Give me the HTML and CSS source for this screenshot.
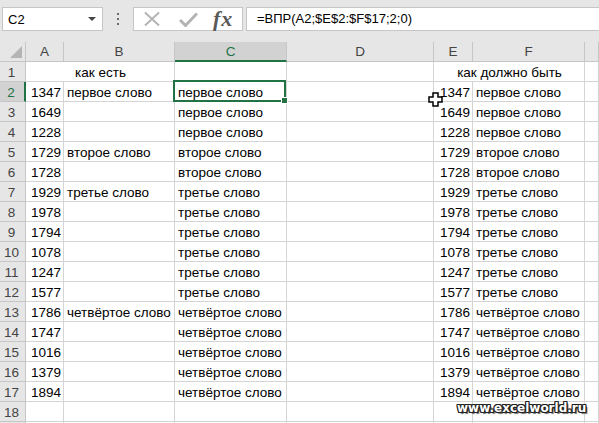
FILE: index.html
```html
<!DOCTYPE html>
<html>

<head>
    <title>ВПР</title>
    <link rel="stylesheet" href="styles.css">
</head>

<body>

    <div class="excel">
        <div class="toolbar">
            <div class="namebox"><span>C2</span><span class="caret"></span></div>
            <div class="grip"><i></i><i></i><i></i></div>
            <div class="fxbox">
                <svg class="cancel" width="18" height="14" viewBox="0 0 18 14">
                    <path d="M2 0.5 L16 13.5 M16 0.5 L2 13.5" />
                </svg>
                <svg class="enter" width="19" height="15" viewBox="0 0 19 15">
                    <path d="M1 8 L6.5 13.5 L18 1.5" />
                </svg>
                <span class="fx">fx</span>
            </div>
            <div class="formula">=ВПР(A2;$E$2:$F$17;2;0)</div>
        </div>

        <div class="sheet">
            <div class="corner"></div>
            <div class="colh">A</div>
            <div class="colh">B</div>
            <div class="colh on">C</div>
            <div class="colh">D</div>
            <div class="colh">E</div>
            <div class="colh">F</div>
            <div class="colh"></div>

            <div class="rowh">1</div>
            <div class="c mid wide">как есть</div>
            <div class="c"></div>
            <div class="c"></div>
            <div class="c mid wide">как должно быть</div>
            <div class="c"></div>

            <div class="rowh on">2</div>
            <div class="c n">1347</div>
            <div class="c">первое слово</div>
            <div class="c sel">первое слово</div>
            <div class="c"></div>
            <div class="c n">1347</div>
            <div class="c">первое слово</div>
            <div class="c"></div>

            <div class="rowh">3</div>
            <div class="c n">1649</div>
            <div class="c"></div>
            <div class="c">первое слово</div>
            <div class="c"></div>
            <div class="c n">1649</div>
            <div class="c">первое слово</div>
            <div class="c"></div>

            <div class="rowh">4</div>
            <div class="c n">1228</div>
            <div class="c"></div>
            <div class="c">первое слово</div>
            <div class="c"></div>
            <div class="c n">1228</div>
            <div class="c">первое слово</div>
            <div class="c"></div>

            <div class="rowh">5</div>
            <div class="c n">1729</div>
            <div class="c">второе слово</div>
            <div class="c">второе слово</div>
            <div class="c"></div>
            <div class="c n">1729</div>
            <div class="c">второе слово</div>
            <div class="c"></div>

            <div class="rowh">6</div>
            <div class="c n">1728</div>
            <div class="c"></div>
            <div class="c">второе слово</div>
            <div class="c"></div>
            <div class="c n">1728</div>
            <div class="c">второе слово</div>
            <div class="c"></div>

            <div class="rowh">7</div>
            <div class="c n">1929</div>
            <div class="c">третье слово</div>
            <div class="c">третье слово</div>
            <div class="c"></div>
            <div class="c n">1929</div>
            <div class="c">третье слово</div>
            <div class="c"></div>

            <div class="rowh">8</div>
            <div class="c n">1978</div>
            <div class="c"></div>
            <div class="c">третье слово</div>
            <div class="c"></div>
            <div class="c n">1978</div>
            <div class="c">третье слово</div>
            <div class="c"></div>

            <div class="rowh">9</div>
            <div class="c n">1794</div>
            <div class="c"></div>
            <div class="c">третье слово</div>
            <div class="c"></div>
            <div class="c n">1794</div>
            <div class="c">третье слово</div>
            <div class="c"></div>

            <div class="rowh">10</div>
            <div class="c n">1078</div>
            <div class="c"></div>
            <div class="c">третье слово</div>
            <div class="c"></div>
            <div class="c n">1078</div>
            <div class="c">третье слово</div>
            <div class="c"></div>

            <div class="rowh">11</div>
            <div class="c n">1247</div>
            <div class="c"></div>
            <div class="c">третье слово</div>
            <div class="c"></div>
            <div class="c n">1247</div>
            <div class="c">третье слово</div>
            <div class="c"></div>

            <div class="rowh">12</div>
            <div class="c n">1577</div>
            <div class="c"></div>
            <div class="c">третье слово</div>
            <div class="c"></div>
            <div class="c n">1577</div>
            <div class="c">третье слово</div>
            <div class="c"></div>

            <div class="rowh">13</div>
            <div class="c n">1786</div>
            <div class="c">четвёртое слово</div>
            <div class="c">четвёртое слово</div>
            <div class="c"></div>
            <div class="c n">1786</div>
            <div class="c">четвёртое слово</div>
            <div class="c"></div>

            <div class="rowh">14</div>
            <div class="c n">1747</div>
            <div class="c"></div>
            <div class="c">четвёртое слово</div>
            <div class="c"></div>
            <div class="c n">1747</div>
            <div class="c">четвёртое слово</div>
            <div class="c"></div>

            <div class="rowh">15</div>
            <div class="c n">1016</div>
            <div class="c"></div>
            <div class="c">четвёртое слово</div>
            <div class="c"></div>
            <div class="c n">1016</div>
            <div class="c">четвёртое слово</div>
            <div class="c"></div>

            <div class="rowh">16</div>
            <div class="c n">1379</div>
            <div class="c"></div>
            <div class="c">четвёртое слово</div>
            <div class="c"></div>
            <div class="c n">1379</div>
            <div class="c">четвёртое слово</div>
            <div class="c"></div>

            <div class="rowh">17</div>
            <div class="c n">1894</div>
            <div class="c"></div>
            <div class="c">четвёртое слово</div>
            <div class="c"></div>
            <div class="c n">1894</div>
            <div class="c">четвёртое слово</div>
            <div class="c"></div>

            <div class="rowh">18</div>
            <div class="c"></div>
            <div class="c"></div>
            <div class="c"></div>
            <div class="c"></div>
            <div class="c"></div>
            <div class="c"></div>
            <div class="c"></div>

            <!-- row 19, only its top edge is on screen -->
            <div class="rowh"></div>
            <div class="c"></div>
            <div class="c"></div>
            <div class="c"></div>
            <div class="c"></div>
            <div class="c"></div>
            <div class="c"></div>
            <div class="c"></div>
        </div>

        <!-- mouse pointer over E2 -->
        <svg class="cursor" width="15" height="15" viewBox="0 0 15 15">
            <path d="M5 1 H10 V5 H14 V10 H10 V14 H5 V10 H1 V5 H5 Z" />
        </svg>

        <div class="watermark">www.excelworld.ru</div>
    </div>

</body>

</html>
```

FILE: styles.css
```css
* {
    box-sizing: border-box
}

body {
    margin: 0;
    background: #fff;
}

.excel {
    position: relative;
    width: 599px;
    height: 423px;
    overflow: hidden;
    font-family: "Liberation Sans", Arial, sans-serif;
    color: #000;
}

/* formula bar */

.toolbar {
    display: flex;
    height: 42px;
    padding-top: 7px;
    background: #e6e6e6;
}

.namebox {
    display: flex;
    align-items: center;
    justify-content: space-between;
    margin-left: 2px;
    width: 101px;
    height: 24px;
    padding: 0 6px 0 5px;
    border: 1px solid #c6c6c6;
    background: #fff;
    font-size: 13px;
}

.caret {
    width: 0;
    height: 0;
    border-left: 4px solid transparent;
    border-right: 4px solid transparent;
    border-top: 4px solid #444;
}

.grip {
    display: flex;
    flex-direction: column;
    align-items: center;
    justify-content: center;
    gap: 3px;
    width: 30px;
    height: 24px;
}

.grip i {
    display: block;
    width: 2px;
    height: 2px;
    background: #6b6b6b;
}

.fxbox {
    display: flex;
    align-items: center;
    width: 110px;
    height: 24px;
    border: 1px solid #c6c6c6;
    background: #fff;
}

.fxbox svg {
    fill: none;
    stroke: #b4b4b4;
}

.cancel {
    margin-left: 9px;
    stroke-width: 2;
}

.enter {
    margin-left: 18px;
    stroke-width: 3;
}

.fx {
    margin-left: 15px;
    font-family: "Liberation Serif", serif;
    font-style: italic;
    font-weight: bold;
    font-size: 22px;
    line-height: 22px;
    letter-spacing: 1px;
    color: #595959;
}

.formula {
    flex: 1;
    margin-left: 3px;
    height: 24px;
    padding-left: 10px;
    border: 1px solid #c6c6c6;
    border-right: none;
    background: #fff;
    font-size: 13px;
    line-height: 22px;
}

/* grid */

.sheet {
    display: grid;
    grid-template-columns: 26px 38px 111px 112px 147px 39px 112px 14px;
    grid-auto-rows: 20px;
    font-size: 13.5px;
}

.corner {
    position: relative;
    background: #e6e6e6;
    border-right: 1px solid #c6c6c6;
    border-bottom: 1px solid #c6c6c6;
}

.corner::after {
    content: '';
    position: absolute;
    right: 3px;
    bottom: 3px;
    width: 0;
    height: 0;
    border-left: 12px solid transparent;
    border-bottom: 12px solid #b4b4b4;
}

.colh {
    background: #e6e6e6;
    border-right: 1px solid #c6c6c6;
    border-bottom: 1px solid #c6c6c6;
    text-align: center;
    line-height: 20px;
    color: #444;
}

.colh.on {
    background: #d2d2d2;
    color: #217346;
    border-bottom: 2px solid #217346;
}

.rowh {
    background: #e6e6e6;
    border-right: 1px solid #c6c6c6;
    border-bottom: 1px solid #c6c6c6;
    padding-right: 2px;
    text-align: center;
    line-height: 21px;
    color: #444;
}

.rowh.on {
    background: #d2d2d2;
    color: #217346;
    border-right: 2px solid #217346;
}

.c {
    border-right: 1px solid #d4d4d4;
    border-bottom: 1px solid #d4d4d4;
    padding: 0 2px 0 3px;
    line-height: 22px;
    white-space: nowrap;
}

.n {
    text-align: right;
}

.wide {
    grid-column: span 2;
}

.mid {
    text-align: center;
}

.sel {
    position: relative;
}

.sel::before {
    content: '';
    position: absolute;
    left: -2px;
    top: -2px;
    right: 0;
    bottom: -1px;
    border: 2px solid #217346;
}

.sel::after {
    content: '';
    position: absolute;
    right: -1px;
    bottom: -2px;
    width: 5px;
    height: 5px;
    background: #217346;
    box-shadow: 0 0 0 1px #fff;
}

/* overlays */

.cursor {
    position: absolute;
    left: 428px;
    top: 92px;
    fill: #fff;
    stroke: #000;
    stroke-width: 1.5;
}

.watermark {
    position: absolute;
    left: 457px;
    top: 401px;
    font-family: "DejaVu Sans", sans-serif;
    font-weight: bold;
    font-size: 12px;
    line-height: 14px;
    color: #fff;
    text-shadow: 1px 0 0 #222, -1px 0 0 #222, 0 1px 0 #222, 0 -1px 0 #222,
        1px 1px 0 #222, -1px -1px 0 #222, 1px -1px 0 #222, -1px 1px 0 #222,
        2px 2px 1px #666;
}
```
